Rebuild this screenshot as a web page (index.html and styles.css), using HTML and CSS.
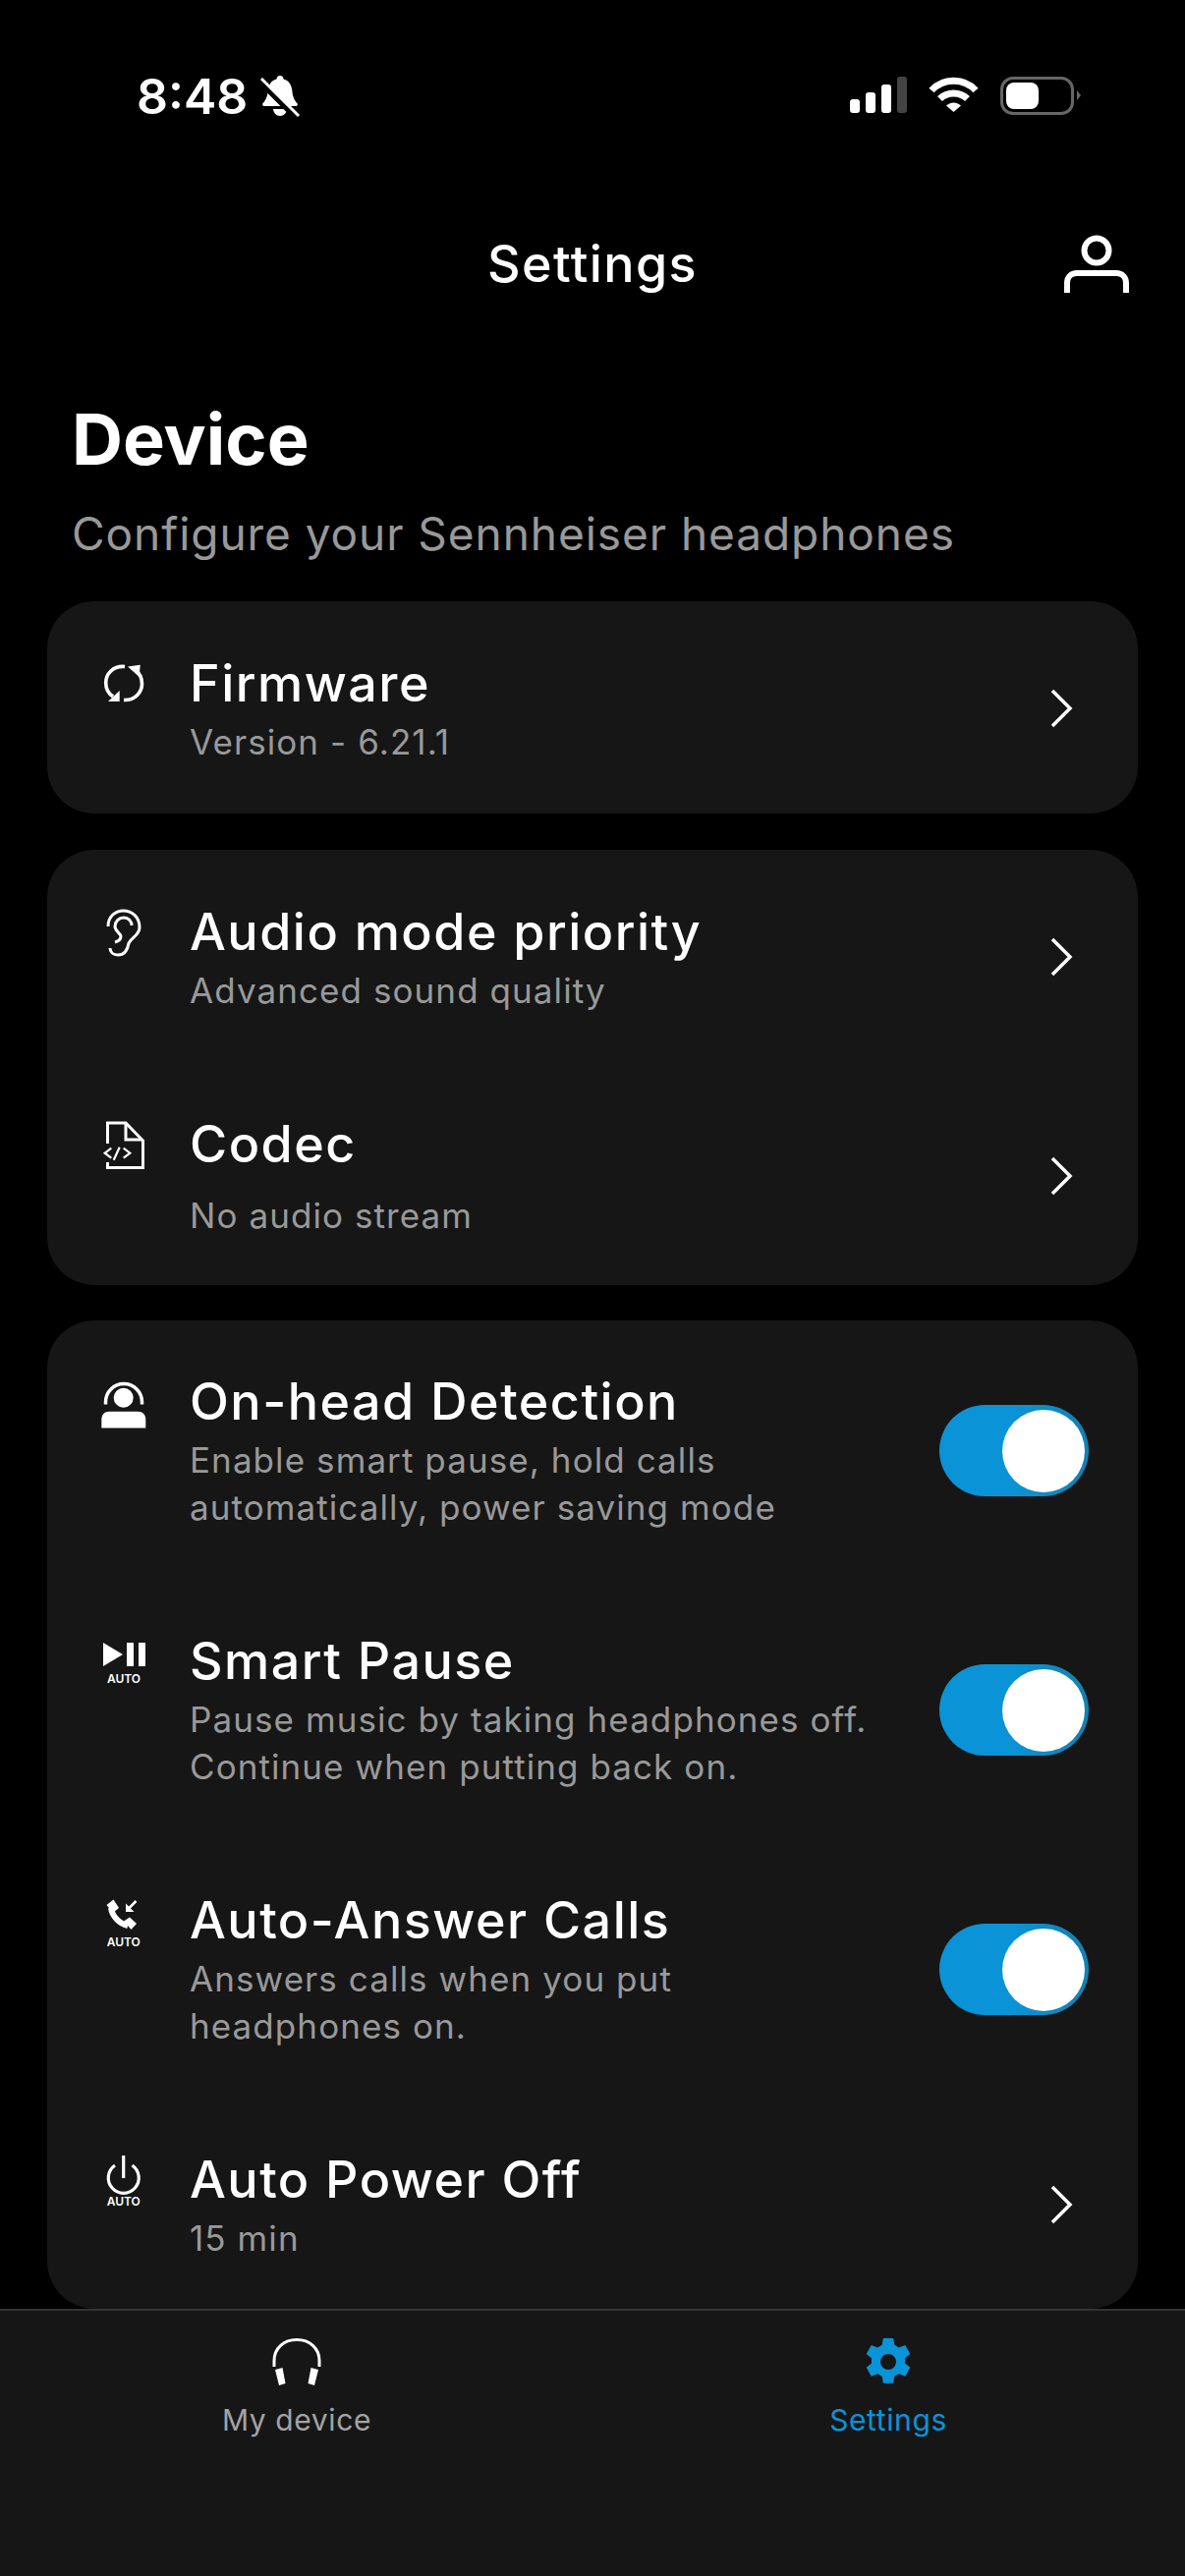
FILE: index.html
```html
<!DOCTYPE html>
<html lang="en">
<head>
  <meta charset="UTF-8">
  <title>Settings</title>
  <link rel="stylesheet" href="styles.css">
</head>
<body>
  <div class="status-bar">
    <div class="status-left">
      <span class="time">8:48</span>
      <svg class="bell" viewBox="0 0 40 42" fill="#fff">
        <path d="M20 0c2 0 3.500 1.500 3.500 3.500 6 1.500 8.500 6.500 9 13 .4 6 3 9.500 5.500 12.500l-1 2H3l-1-2c2.500-3 5-6.500 5.500-12.500.5-6.500 3-11.500 9-13C16.500 1.500 18 0 20 0z"/>
        <path d="M13 34h14c-.5 4-3 7-7 7s-6.500-3-7-7z"/>
        <path d="M-1 6 35 42" stroke="#000" stroke-width="5"/>
        <path d="M1 3 39 41" stroke="#fff" stroke-width="3"/>
      </svg>
    </div>
    <div class="status-right">
      <div class="signal">
        <i class="bar b1"></i><i class="bar b2"></i><i class="bar b3"></i><i class="bar b4"></i>
      </div>
      <svg class="wifi" viewBox="0 0 51 37" fill="none" stroke="#fff" stroke-width="7">
        <path d="M3 14C15 1 36 1 48 14"/>
        <path d="M11.500 22.500C19 15 32 15 39.500 22.500"/>
        <path d="M18 29.500 25.500 36 33 29.500C28 25.500 23 25.500 18 29.500z" fill="#fff" stroke="none"/>
      </svg>
      <div class="battery"><div class="battery-fill"></div></div>
      <div class="battery-nub"></div>
    </div>
  </div>

  <header class="topbar">
    <h1 class="topbar-title">Settings</h1>
    <svg class="profile" viewBox="0 0 66 58" fill="none" stroke="#fff" stroke-width="6">
      <circle cx="33" cy="15" r="12.500"/>
      <path d="M3 58V48c0-6 4-10 10-10h40c6 0 10 4 10 10v10"/>
    </svg>
  </header>

  <main class="content">
    <h2 class="page-title">Device</h2>
    <p class="page-sub">Configure your Sennheiser headphones</p>

    <section class="card card-one">
      <a class="row">
        <span class="row-icon">
          <svg viewBox="0 0 48 48" fill="none" stroke="#fff" stroke-width="3.600">
            <path d="M26 6.500C14 5.500 6.700 14 6.700 23c0 6 2.800 11 7.300 14"/>
            <path d="M9 42h11.700V31z" fill="#fff" stroke="none"/>
            <path d="M25 40.500C37 41 43.500 32 43.500 24c0-6-2.500-11-7.500-15"/>
            <path d="M29 6.500 41.700 4.700 40.700 17z" fill="#fff" stroke="none"/>
          </svg>
        </span>
        <div class="row-text">
          <div class="row-title">Firmware</div>
          <div class="row-desc">Version - 6.21.1</div>
        </div>
        <svg class="chevron" viewBox="0 0 24 40" fill="none" stroke="#fff" stroke-width="3.500"><path d="M3 2 21 20 3 38"/></svg>
      </a>
    </section>

    <section class="card card-two">
      <a class="row">
        <span class="row-icon">
          <svg viewBox="0 0 48 48" fill="none" stroke="#fff" stroke-width="3">
            <path d="M9 18C9 8 16 2 24.500 2 33 2 41 8 41 19c0 8-8 10-11 16-1 6-4 12-11 12-5 0-8-3-8-7"/>
            <path d="M16 34c4-1 6-3 6-6 0-3-6-5-6-10 0-5 4-9 9-9 5 0 8 4 8 8"/>
          </svg>
        </span>
        <div class="row-text">
          <div class="row-title">Audio mode priority</div>
          <div class="row-desc">Advanced sound quality</div>
        </div>
        <svg class="chevron" viewBox="0 0 24 40" fill="none" stroke="#fff" stroke-width="3.500"><path d="M3 2 21 20 3 38"/></svg>
      </a>
      <a class="row row-codec">
        <span class="row-icon">
          <svg viewBox="0 0 48 48" fill="none" stroke="#fff" stroke-width="3">
            <path d="M8.500 23V2H27L44.500 20V47.500H8.500V42"/>
            <path d="M27 2V19H44"/>
            <path d="M12.300 27.700 5.700 32.700 12.300 37.700M20.700 26.700 14.700 39.700M24.700 27.700 31.300 32.700 24.700 37.700" stroke-width="2.200"/>
          </svg>
        </span>
        <div class="row-text">
          <div class="row-title">Codec</div>
          <div class="row-desc">No audio stream</div>
        </div>
        <svg class="chevron" viewBox="0 0 24 40" fill="none" stroke="#fff" stroke-width="3.500"><path d="M3 2 21 20 3 38"/></svg>
      </a>
    </section>

    <section class="card card-three">
      <div class="row">
        <span class="row-icon">
          <svg viewBox="0 0 48 48" fill="none" stroke="#fff" stroke-width="3.500">
            <path d="M6.500 26.500V24a18.500 18.500 0 0 1 37 0v2.500"/>
            <circle cx="24.700" cy="19.700" r="10" fill="#fff" stroke="none"/>
            <path d="M2.300 50.500V42c0-5 3-8.300 8-8.300h29c5 0 8 3.300 8 8.300v8.500z" fill="#fff" stroke="none"/>
          </svg>
        </span>
        <div class="row-text">
          <div class="row-title">On-head Detection</div>
          <div class="row-desc">Enable smart pause, hold calls<br>automatically, power saving mode</div>
        </div>
        <div class="toggle"><div class="knob"></div></div>
      </div>
      <div class="row">
        <span class="row-icon">
          <svg viewBox="0 0 48 48" fill="#fff">
            <path d="M4 5 24 17 4 29z"/>
            <rect x="28" y="5" width="7" height="24"/>
            <rect x="40" y="5" width="7" height="24"/>
            <text class="auto-tag" x="25" y="45.500">AUTO</text>
          </svg>
        </span>
        <div class="row-text">
          <div class="row-title">Smart Pause</div>
          <div class="row-desc">Pause music by taking headphones off.<br>Continue when putting back on.</div>
        </div>
        <div class="toggle"><div class="knob"></div></div>
      </div>
      <div class="row">
        <span class="row-icon">
          <svg viewBox="0 0 48 48" fill="none" stroke="#fff">
            <path d="M12 11c1 8 8 16 17 18" stroke-width="6"/>
            <path d="M7.500 8 14.500 2.500 20 11 14 16z" fill="#fff" stroke="none"/>
            <path d="M25 24.500 31 20.500 38 27 32.500 33z" fill="#fff" stroke="none"/>
            <path d="M37.500 4 30 11.500" stroke-width="2.500"/>
            <path d="M27 6.500V15H35.500z" fill="#fff" stroke="none"/>
            <text class="auto-tag" x="24.700" y="50" stroke="none">AUTO</text>
          </svg>
        </span>
        <div class="row-text">
          <div class="row-title">Auto-Answer Calls</div>
          <div class="row-desc">Answers calls when you put<br>headphones on.</div>
        </div>
        <div class="toggle"><div class="knob"></div></div>
      </div>
      <a class="row">
        <span class="row-icon">
          <svg viewBox="0 0 48 48" fill="none" stroke="#fff" stroke-width="3.200">
            <path d="M16 9a15.500 15.500 0 1 0 17.500 0"/>
            <path d="M24.700 -1V22"/>
            <text class="auto-tag" x="24.700" y="50" stroke="none">AUTO</text>
          </svg>
        </span>
        <div class="row-text">
          <div class="row-title">Auto Power Off</div>
          <div class="row-desc">15 min</div>
        </div>
        <svg class="chevron" viewBox="0 0 24 40" fill="none" stroke="#fff" stroke-width="3.500"><path d="M3 2 21 20 3 38"/></svg>
      </a>
    </section>
  </main>

  <nav class="tabbar">
    <a class="tab">
      <svg viewBox="0 0 50 48" fill="none" stroke="#fff" stroke-width="3">
        <path d="M2 29V23C2 10 12 1.500 25 1.500S48 10 48 23V29"/>
        <path d="M3 32 10.500 30 13.500 46 7 48z" fill="#fff" stroke="none"/>
        <path d="M47 32 39.500 30 36.500 46 43 48z" fill="#fff" stroke="none"/>
      </svg>
      <span class="tab-label">My device</span>
    </a>
    <a class="tab tab-active">
      <svg viewBox="0 0 42 42" fill="#0b93d8">
        <path fill-rule="evenodd" d="M16.500 0h9l1 6 4 2.300 5.600-2.100 4.400 7.700-4.600 3.800v4.600l4.600 3.800-4.400 7.700-5.600-2.100-4 2.300-1 6h-9l-1-6-4-2.300-5.600 2.100L1.500 26.100l4.600-3.800v-4.600L1.500 13.900 5.900 6.200l5.600 2.100 4-2.300zM21 14a7 7 0 1 0 0 14 7 7 0 0 0 0-14z"/>
      </svg>
      <span class="tab-label">Settings</span>
    </a>
  </nav>
</body>
</html>
```

FILE: styles.css
```css
* {
  box-sizing: border-box;
}
html, body {
  height: 100%;
}
body {
  margin: 0;
  font-family: Inter, "Noto Sans", sans-serif;
  background: #000;
  color: #fff;
  display: flex;
  flex-direction: column;
  overflow: hidden;
}
svg {
  display: block;
  overflow: visible;
}

/* status bar */
.status-bar {
  height: 196px;
  flex: none;
  display: flex;
  justify-content: space-between;
  padding: 77px 106px 0 139px;
}
.status-left {
  display: flex;
  align-items: flex-start;
  gap: 13px;
}
.time {
  font-size: 50px;
  font-weight: 600;
  line-height: 42px;
}
.bell {
  width: 40px;
  height: 42px;
}
.status-right {
  display: flex;
  align-items: flex-start;
  padding-top: 1px;
}
.signal {
  width: 58px;
  height: 37px;
  display: flex;
  align-items: flex-end;
  gap: 6px;
  margin-right: 22px;
}
.bar {
  width: 10px;
  background: #fff;
  border-radius: 3px;
}
.b1 { height: 14px; }
.b2 { height: 21px; }
.b3 { height: 29px; }
.b4 { height: 37px; background: #444; }
.wifi {
  width: 51px;
  height: 37px;
  margin-right: 22px;
}
.battery {
  width: 75px;
  height: 39px;
  border: 3px solid #666;
  border-radius: 13px;
  padding: 3px;
}
.battery-fill {
  width: 33px;
  height: 27px;
  background: #fff;
  border-radius: 8px;
}
.battery-nub {
  width: 0;
  height: 0;
  margin: 14px 0 0 3px;
  border-left: 4px solid #666;
  border-top: 5px solid transparent;
  border-bottom: 5px solid transparent;
}

/* header */
.topbar {
  flex: none;
  height: 146px;
  position: relative;
  display: flex;
  justify-content: center;
}
.topbar-title {
  margin: 43px 0 0;
  font-size: 52px;
  font-weight: 500;
  line-height: 60px;
  letter-spacing: 1.400px;
}
.profile {
  position: absolute;
  right: 57px;
  top: 44px;
  width: 66px;
  height: 58px;
}

.content {
  flex: 1;
  min-height: 0;
  overflow: hidden;
  padding: 63px 48px 0;
  display: flex;
  flex-direction: column;
}
.page-title {
  margin: 0 0 0 25px;
  font-size: 72px;
  font-weight: 700;
  line-height: 84px;
}
.page-sub {
  margin: 26px 0 41px 25px;
  font-size: 46px;
  line-height: 56px;
  color: #999;
  letter-spacing: 0.940px;
}

/* cards */
.card {
  flex: none;
  background: #161616;
  border-radius: 48px;
  padding: 51px 50px 49px 53px;
  margin-bottom: 37px;
  display: flex;
  flex-direction: column;
  gap: 100px;
}
.card-two {
  padding-bottom: 47px;
  margin-bottom: 36px;
}
.card-three {
  padding-top: 50px;
  padding-bottom: 48px;
  margin-bottom: 0;
}
.row {
  display: flex;
  align-items: center;
  position: relative;
}
.row-icon {
  align-self: flex-start;
  width: 48px;
  height: 66px;
  flex: none;
  display: flex;
  align-items: center;
  margin-right: 44px;
}
.row-icon svg {
  width: 48px;
  height: 48px;
}
.auto-tag {
  font-size: 12px;
  font-weight: 600;
  fill: #fff;
  text-anchor: middle;
}
.row-text {
  flex: 1;
}
.row-title {
  font-size: 52px;
  font-weight: 500;
  line-height: 66px;
  letter-spacing: 1.500px;
}
.row-desc {
  margin-top: 2px;
  font-size: 35px;
  line-height: 48px;
  color: #999;
  letter-spacing: 1.080px;
}
.row-codec .row-desc {
  margin-top: 15px;
}
.chevron {
  width: 24px;
  height: 40px;
  flex: none;
  margin-right: 16px;
}
.toggle {
  width: 152px;
  height: 93px;
  flex: none;
  border-radius: 47px;
  background: linear-gradient(90deg, #0a93d6 50%, #1380b0);
  padding: 5px 4px;
  display: flex;
  justify-content: flex-end;
}
.knob {
  width: 84px;
  height: 84px;
  border-radius: 50%;
  background: #fff;
}

/* tab bar */
.tabbar {
  flex: none;
  height: 272px;
  background: #161616;
  border-top: 2px solid #333;
  display: flex;
  padding: 28px 0 0 1px;
}
.tab {
  width: 602px;
  display: flex;
  flex-direction: column;
  align-items: center;
}
.tab svg {
  width: 50px;
  height: 48px;
  margin-bottom: 15px;
}
.tab-label {
  font-size: 30px;
  line-height: 40px;
  letter-spacing: 0.600px;
  color: #a3a3a3;
}
.tab-active .tab-label {
  color: #0b93d8;
}
```
